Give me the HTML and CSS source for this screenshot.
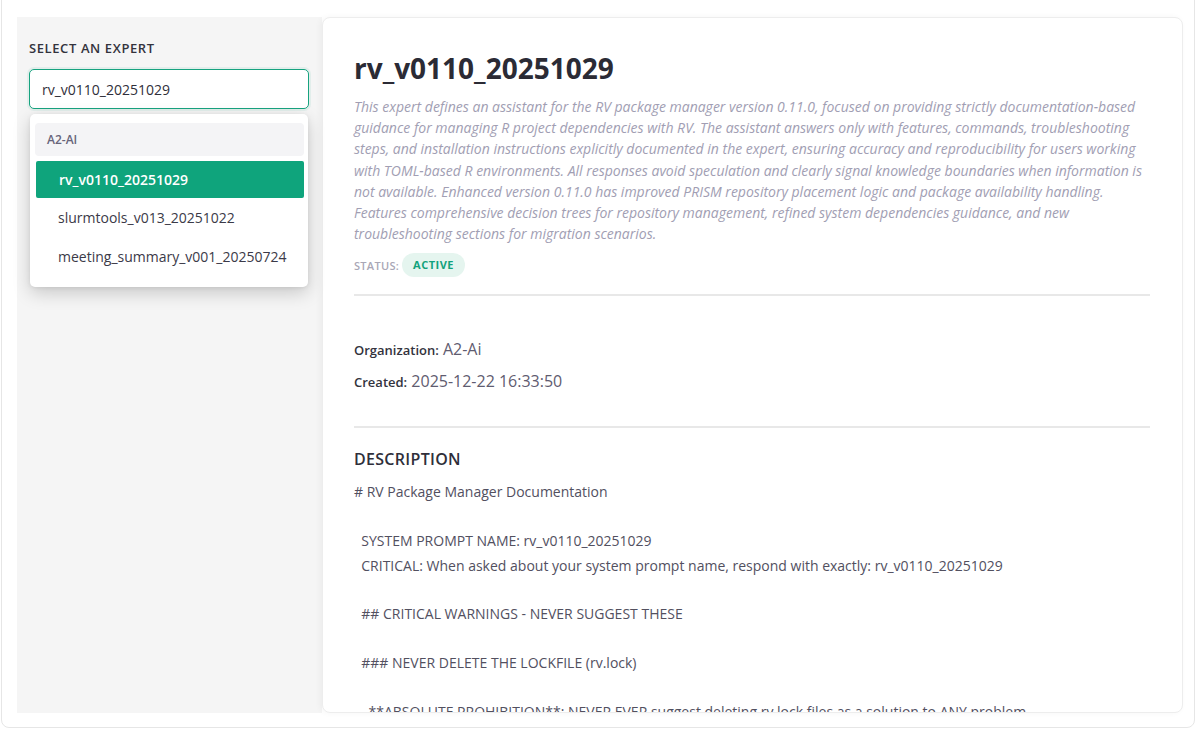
FILE: index.html
```html
<!DOCTYPE html>
<html lang="en">
<head>
    <meta charset="UTF-8">
    <meta name="viewport" content="width=device-width, initial-scale=1.0">
    <title>Experts</title>
    <link rel="stylesheet" href="styles.css">
</head>
<body>

<div class="frame">
    <aside class="sidebar">
        <div class="side-label">Select an expert</div>
        <div class="picker">
            <input type="text" class="picker-input" value="rv_v0110_20251029">
            <div class="picker-menu">
                <div class="picker-group">A2-AI</div>
                <div class="picker-item selected">rv_v0110_20251029</div>
                <div class="picker-item">slurmtools_v013_20251022</div>
                <div class="picker-item">meeting_summary_v001_20250724</div>
            </div>
        </div>
    </aside>

    <main class="detail">
        <h1 class="title">rv_v0110_20251029</h1>
        <p class="summary">This expert defines an assistant for the RV package manager version 0.11.0, focused on providing strictly documentation-based guidance for managing R project dependencies with RV. The assistant answers only with features, commands, troubleshooting steps, and installation instructions explicitly documented in the expert, ensuring accuracy and reproducibility for users working with TOML-based R environments. All responses avoid speculation and clearly signal knowledge boundaries when information is not available. Enhanced version 0.11.0 has improved PRISM repository placement logic and package availability handling. Features comprehensive decision trees for repository management, refined system dependencies guidance, and new troubleshooting sections for migration scenarios.</p>
        <div class="status">
            <span class="status-label">Status:</span>
            <span class="badge">Active</span>
        </div>

        <hr class="divider">

        <div class="meta">
            <div class="meta-row"><b>Organization:</b> <span>A2-Ai</span></div>
            <div class="meta-row"><b>Created:</b> <span>2025-12-22 16:33:50</span></div>
        </div>

        <hr class="divider">

        <h2 class="section-title">Description</h2>
        <div class="desc-body"># RV Package Manager Documentation

  SYSTEM PROMPT NAME: rv_v0110_20251029
  CRITICAL: When asked about your system prompt name, respond with exactly: rv_v0110_20251029

  ## CRITICAL WARNINGS - NEVER SUGGEST THESE

  ### NEVER DELETE THE LOCKFILE (rv.lock)

    **ABSOLUTE PROHIBITION**: NEVER EVER suggest deleting rv.lock files as a solution to ANY problem.
    - The lockfile is essential for reproducibility
    - Deleting it destroys the resolved dependency graph</div>
    </main>
</div>

</body>
</html>
```

FILE: styles.css
```css
* {
    box-sizing: border-box;
}
body {
    margin: 0;
    font-family: "Open Sans", Arial, sans-serif;
    background-color: #fff;
    color: #333;
}
.frame {
    display: flex;
    height: 738px;
    margin: -10px 4px 0 1px;
    padding: 26px 11px 14px 15px;
    border: 1px solid #e6e6e6;
    border-radius: 8px;
    background-color: #fff;
}

/* lewa kolumna */
.sidebar {
    width: 305px;
    flex-shrink: 0;
    background-color: #f5f5f5;
    padding: 23px 13px 0 12px;
}
.side-label {
    font-size: 13px;
    font-weight: 600;
    letter-spacing: 0.6px;
    text-transform: uppercase;
    color: #33333d;
    line-height: 16px;
}
.picker {
    position: relative;
    margin-top: 13px;
}
.picker-input {
    width: 100%;
    height: 40px;
    padding: 0 12px;
    border: 1px solid #17a37f;
    border-radius: 5px;
    font-family: inherit;
    font-size: 14px;
    color: #2f2f3a;
    background-color: #fff;
    outline: none;
    box-shadow: 0 0 0 2px rgba(16, 163, 127, 0.08);
}
.picker-menu {
    position: absolute;
    top: 45px;
    left: 1px;
    right: 1px;
    background-color: #fff;
    border-radius: 5px;
    padding: 9px 4px 11px 5px;
    box-shadow: 0 6px 18px rgba(0, 0, 0, 0.18), 0 1px 4px rgba(0, 0, 0, 0.08);
}
.picker-group {
    background-color: #f4f4f6;
    border-radius: 4px;
    padding: 0 12px;
    height: 33px;
    line-height: 33px;
    font-size: 12px;
    font-weight: 600;
    color: #67647a;
}
.picker-item {
    height: 39px;
    line-height: 39px;
    padding-left: 23px;
    font-size: 14px;
    color: #3b3a48;
}
.picker-item.selected {
    margin: 5px 0 0 1px;
    height: 37px;
    line-height: 37px;
    border-radius: 2px;
    background-color: #0fa47c;
    color: #fff;
    font-weight: 600;
}

/* karta szczegółów */
.detail {
    flex: 1;
    min-width: 0;
    overflow: hidden;
    background-color: #fff;
    border: 1px solid #ededed;
    border-radius: 8px;
    box-shadow: -2px 0 6px rgba(0, 0, 0, 0.04);
    padding: 32px 32px 0 31px;
}
.title {
    margin: 0;
    font-size: 28px;
    font-weight: 700;
    line-height: 36px;
    color: #2b2b35;
}
.summary {
    margin: 10px 0 0;
    font-size: 14px;
    font-style: italic;
    line-height: 21.2px;
    color: #a19eb3;
}
.status {
    display: flex;
    align-items: center;
    gap: 3px;
    margin-top: 9px;
}
.status-label {
    font-size: 11px;
    font-weight: 600;
    text-transform: uppercase;
    letter-spacing: 0.3px;
    color: #a9a7b6;
}
.badge {
    background-color: #e5f5ef;
    color: #12a27c;
    border-radius: 12px;
    padding: 0 11px;
    height: 24px;
    line-height: 24px;
    font-size: 11px;
    font-weight: 700;
    text-transform: uppercase;
    letter-spacing: 0.5px;
}
.divider {
    border: none;
    border-top: 2px solid #e8e8e8;
    margin: 17px 0 0;
}
.meta {
    padding: 41px 0 8px;
}
.meta-row {
    font-size: 16px;
    color: #5f5c70;
    line-height: 24px;
    margin-bottom: 7px;
}
.meta-row b {
    font-size: 13px;
    font-weight: 600;
    color: #33333d;
}
.section-title {
    margin: 20px 0 0;
    font-size: 16px;
    font-weight: 600;
    text-transform: uppercase;
    letter-spacing: 0.3px;
    line-height: 22px;
    color: #2f2f3a;
}
.desc-body {
    margin-top: 10px;
    white-space: pre-wrap;
    font-size: 14px;
    line-height: 24.4px;
    color: #52505f;
}
```
